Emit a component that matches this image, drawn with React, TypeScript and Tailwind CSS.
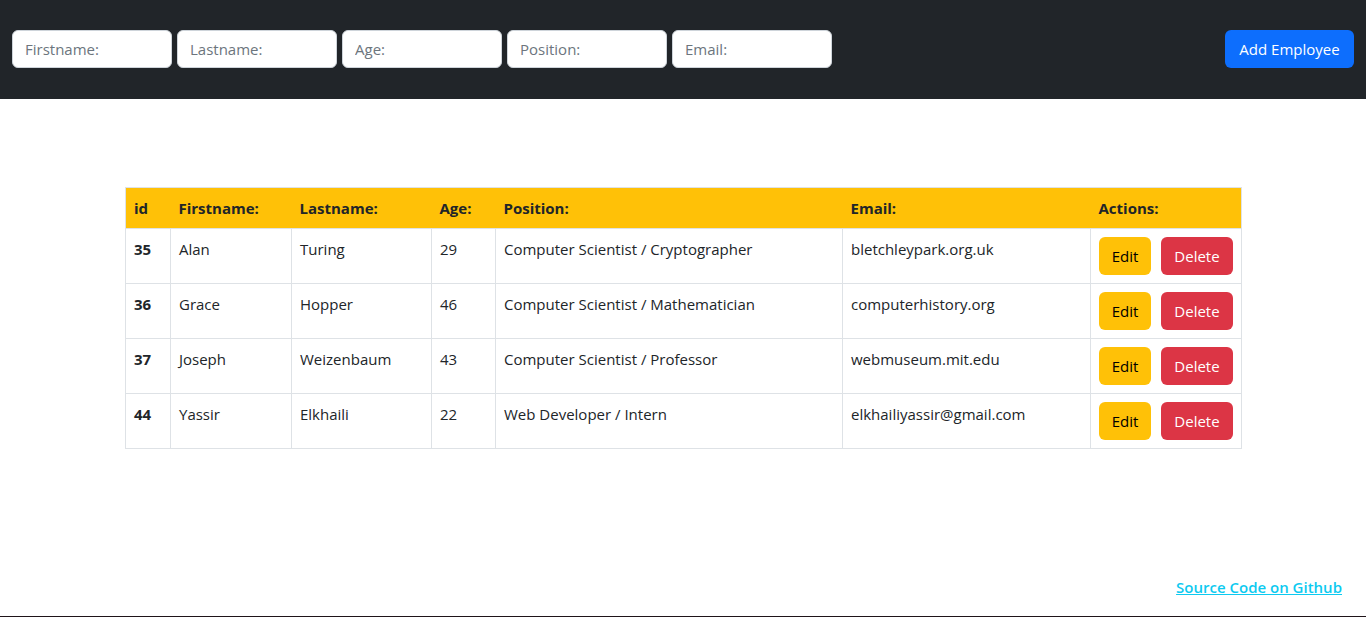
import React from "react";

const rows = [
  { id: 35, first: "Alan", last: "Turing", age: 29, pos: "Computer Scientist / Cryptographer", email: "bletchleypark.org.uk" },
  { id: 36, first: "Grace", last: "Hopper", age: 46, pos: "Computer Scientist / Mathematician", email: "computerhistory.org" },
  { id: 37, first: "Joseph", last: "Weizenbaum", age: 43, pos: "Computer Scientist / Professor", email: "webmuseum.mit.edu" },
  { id: 44, first: "Yassir", last: "Elkhaili", age: 22, pos: "Web Developer / Intern", email: "elkhailiyassir@gmail.com" },
];

const placeholders = ["Firstname:", "Lastname:", "Age:", "Position:", "Email:"];

export default function App() {
  return (
    <div
      className="flex h-[617px] flex-col bg-white text-[#212529] border-b border-[#1f1419]"
      style={{ fontFamily: '"Open Sans", "Noto Sans", sans-serif' }}
    >
      <header className="flex h-[99px] items-start justify-between bg-[#212529] px-3 pt-[30px]">
        <div className="flex gap-[5px]">
          {placeholders.map((p) => (
            <input
              key={p}
              placeholder={p}
              className="h-[38px] w-[160px] rounded-[6px] border border-[#ced4da] bg-white px-3 text-[15px] text-[#212529] placeholder:text-[#6c757d] outline-none"
            />
          ))}
        </div>
        <button className="h-[38px] w-[129px] rounded-[6px] bg-[#0d6efd] text-[15px] leading-6 text-white">
          Add Employee
        </button>
      </header>

      <main className="mx-auto mt-[88px] w-[1116px]">
        <table className="w-full table-fixed border-collapse text-[15px] leading-6">
          <colgroup>
            <col className="w-[45px]" />
            <col className="w-[121px]" />
            <col className="w-[140px]" />
            <col className="w-[64px]" />
            <col className="w-[347px]" />
            <col className="w-[248px]" />
            <col className="w-[151px]" />
          </colgroup>
          <thead>
            <tr className="h-[41px] bg-[#ffc107] text-left font-bold">
              {["id", "Firstname:", "Lastname:", "Age:", "Position:", "Email:", "Actions:"].map((h, i) => (
                <th
                  key={h}
                  className={`border-y border-[#dee2e6] px-2 align-middle ${i === 0 ? "border-l" : ""} ${i === 6 ? "border-r" : ""}`}
                >
                  {h}
                </th>
              ))}
            </tr>
          </thead>
          <tbody>
            {rows.map((r) => (
              <tr key={r.id} className="h-[55px]">
                <td className="border border-[#dee2e6] px-2 pt-2 align-top font-bold">{r.id}</td>
                <td className="border border-[#dee2e6] px-2 pt-2 align-top">{r.first}</td>
                <td className="border border-[#dee2e6] px-2 pt-2 align-top">{r.last}</td>
                <td className="border border-[#dee2e6] px-2 pt-2 align-top">{r.age}</td>
                <td className="border border-[#dee2e6] px-2 pt-2 align-top">{r.pos}</td>
                <td className="border border-[#dee2e6] px-2 pt-2 align-top">{r.email}</td>
                <td className="border border-[#dee2e6] px-2 py-2 align-top">
                  <div className="flex gap-[10px]">
                    <button className="h-[38px] w-[52px] rounded-[6px] bg-[#ffc107] text-black">Edit</button>
                    <button className="h-[38px] w-[72px] rounded-[6px] bg-[#dc3545] text-white">Delete</button>
                  </div>
                </td>
              </tr>
            ))}
          </tbody>
        </table>
      </main>

      <footer className="mt-auto flex justify-end px-6 pb-[17px]">
        <a href="#" className="text-[15px] font-semibold leading-6 text-[#0dcaf0] underline">
          Source Code on Github
        </a>
      </footer>
    </div>
  );
}
